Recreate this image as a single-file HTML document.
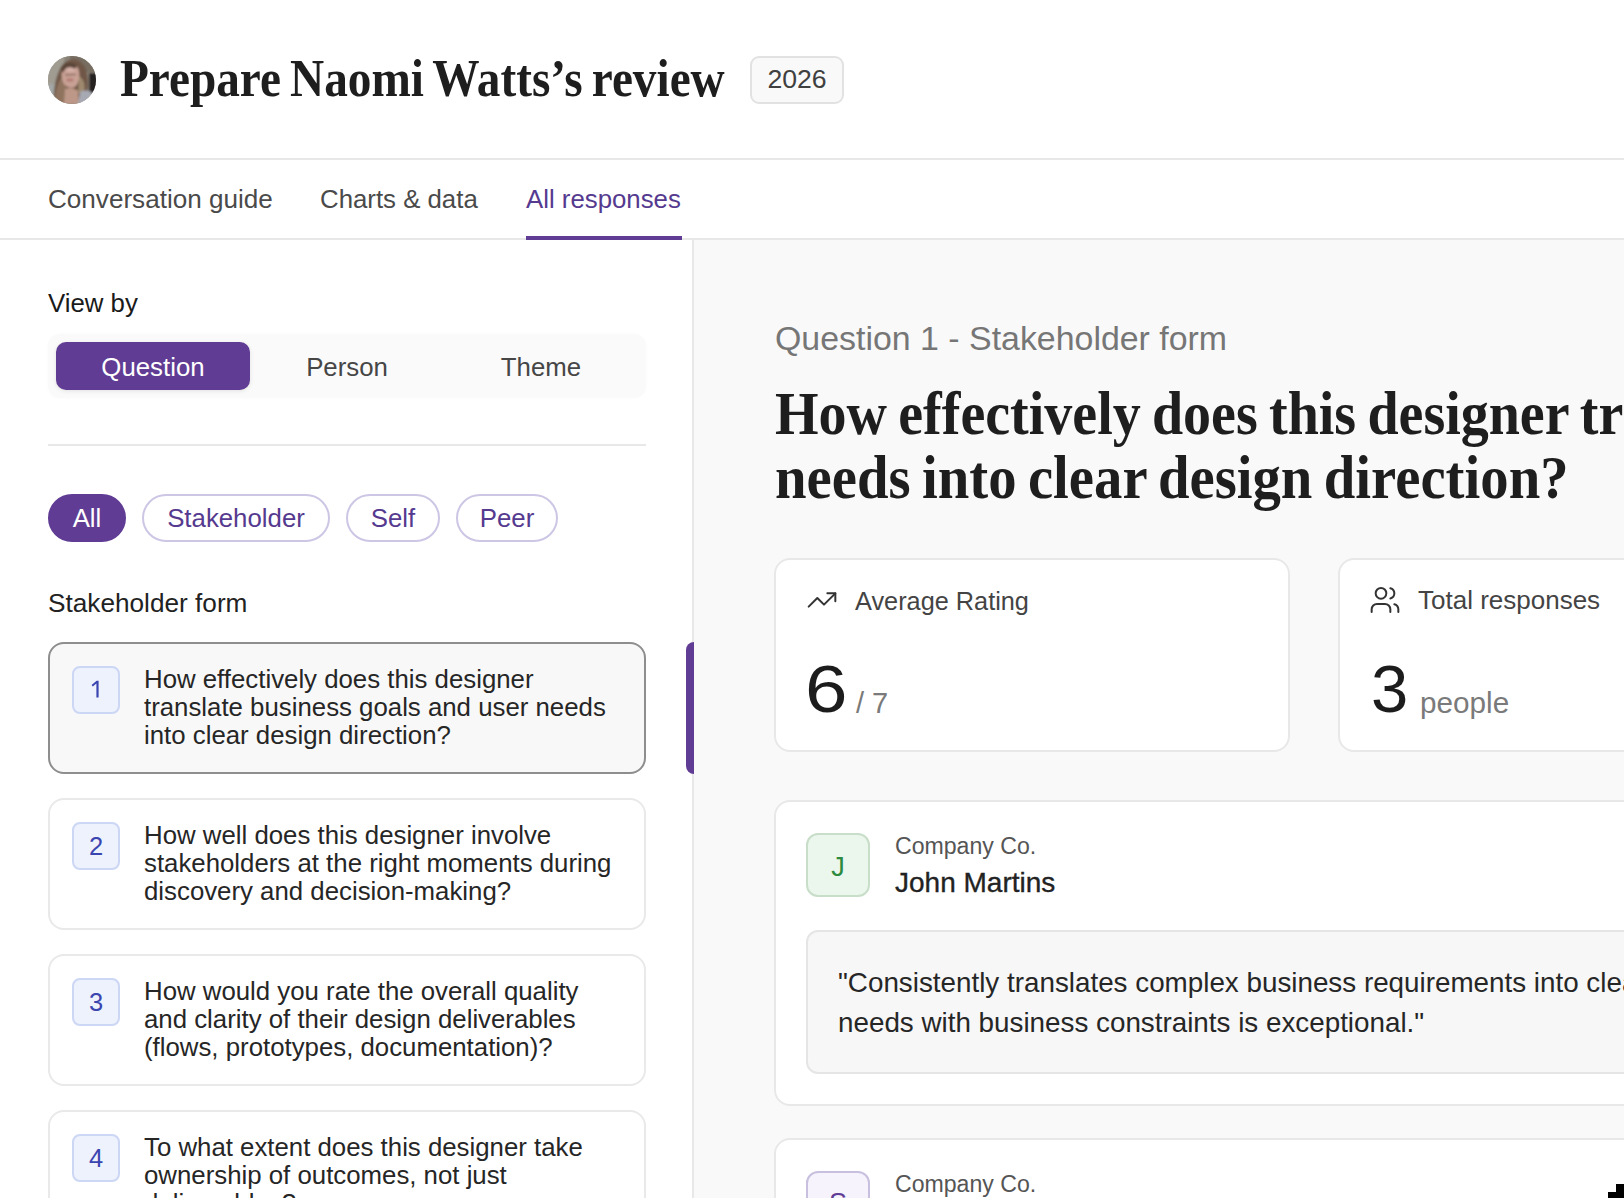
<!DOCTYPE html>
<html><head><meta charset="utf-8">
<style>
*{box-sizing:border-box;margin:0;padding:0}
html,body{width:1624px;height:1198px;overflow:hidden;background:#fff}
body{position:relative;font-family:"Liberation Sans",sans-serif;color:#1f1f1f}
.a{position:absolute;white-space:nowrap}
.t{font-size:25.8px;line-height:30px}
.serif{font-family:"Liberation Serif",serif;font-weight:bold;color:#1e1e1e;transform-origin:0 0}
#avatar{left:48px;top:56px;width:48px;height:48px;border-radius:50%;overflow:hidden;background:#8e877f}
#title{left:120px;top:47.8px;font-size:52.5px;line-height:60px;transform:scaleX(0.9);word-spacing:-3px}
#badge{left:750px;top:56px;width:94px;height:48px;border:2px solid #e2e2e2;border-radius:9px;background:#f9f9f9}
#badge span{position:absolute;left:0;right:0;text-align:center;top:6.1px;font-size:26.6px;line-height:30px;color:#404040}
.hline{left:0;width:1624px;height:2px;background:#e8e8e8}
.tab{top:184.2px;color:#4a4a4a}
#left{left:0;top:240px;width:692px;height:958px;background:#fff}
#vline{left:692px;top:240px;width:2px;height:958px;background:#e8e8e8}
#right{left:694px;top:240px;width:930px;height:958px;background:#f9f9f9}
#seg{left:48px;top:334px;width:598px;height:64px;background:#fafafa;border-radius:12px;box-shadow:0 0 4px rgba(0,0,0,0.02)}
.segb{top:342px;width:194px;height:48px;border-radius:10px;text-align:center}
.segb span{position:absolute;left:0;right:0;top:9.8px;font-size:25.8px;line-height:30px}
.pill{top:494px;height:48px;border-radius:24px;border:2px solid #cdc6e4;text-align:center;color:#553a8f}
.pill span{position:absolute;left:0;right:0;top:7.2px;font-size:25.8px;line-height:30px}
.card{left:48px;width:598px;height:132px;border:2px solid #e9e9e9;border-radius:16px;background:#fff}
.card.sel{border-color:#8e8e8e;background:#f8f8f8}
.num{position:absolute;left:22px;top:22px;width:48px;height:48px;border:2px solid #ccd7f6;background:#eef2fd;border-radius:8px;color:#3b45b0;text-align:center}
.num span{position:absolute;left:0;right:0;top:7px;font-size:25.5px;line-height:30px}
.qt{position:absolute;left:94px;top:21.2px;font-size:25.8px;line-height:28px;color:#262626;white-space:nowrap}
#bar{left:686px;top:642px;width:8px;height:132px;background:#603c94;border-radius:8px 0 0 8px}
.stat{top:558px;width:516px;height:194px;background:#fff;border:2px solid #e8e8e8;border-radius:16px}
.resp{left:774px;width:1080px;background:#fff;border:2px solid #e8e8e8;border-radius:16px}
.av{position:absolute;left:30px;top:31px;width:64px;height:64px;border-radius:12px;text-align:center}
.av span{position:absolute;left:0;right:0;top:17px;font-size:27px;line-height:30px}
#corner{left:1608px;top:1184px;width:16px;height:14px}
</style></head><body>

<div class="a" id="avatar">
  <svg width="48" height="48" viewBox="0 0 48 48">
    <defs><filter id="bl" x="-20%" y="-20%" width="140%" height="140%"><feGaussianBlur stdDeviation="1.1"/></filter></defs>
    <g filter="url(#bl)">
    <rect x="-4" y="-4" width="56" height="56" fill="#8a8378"/>
    <rect x="-4" y="-4" width="20" height="56" fill="#a09c92"/>
    <rect x="-4" y="28" width="12" height="24" fill="#a3a7a5"/>
    <rect x="22" y="-4" width="30" height="20" fill="#776d61"/>
    <rect x="41" y="17" width="10" height="20" fill="#262020"/>
    <path d="M6 48 C5 36 7 24 11 15 C14 7 20 3 26 3.5 C33 4 38 10 39 18 C41 27 40 35 37 40 L30 46 Z" fill="#6f5747"/>
    <path d="M6 48 C7 38 9 28 13 22 L18 27 L18 48 Z" fill="#8f735e"/>
    <path d="M31 20 C37 24 38 32 35 38 L30 37 Z" fill="#9f8a6f"/>
    <path d="M15 12 C17 9 26 8 30 12 C32 17 32 25 28 30 C25 33 19 32 16 28 C13 23 13 16 15 12 Z" fill="#c9a195"/>
    <ellipse cx="22.5" cy="12.5" rx="5.5" ry="3.2" fill="#d6b2a9"/>
    <ellipse cx="22" cy="24" rx="3.8" ry="1.7" fill="#b37c74"/>
    <path d="M17 19 L28 18.5" stroke="#6b5243" stroke-width="1.2"/>
    <path d="M16 48 L17 33 C21 31 27 32 30 35 L31 48 Z" fill="#bd9787"/>
    <path d="M30 48 L32 36 C36 34 41 34 44 37 L46 48 Z" fill="#a7a9b3"/>
    <path d="M13 13 C15 6 22 5 29 9 L27 13 C22 10 17 11 15 17 Z" fill="#5a4537"/>
    </g>
  </svg>
</div>
<div class="a serif" id="title">Prepare Naomi Watts’s review</div>
<div class="a" id="badge"><span>2026</span></div>

<div class="a hline" style="top:158px"></div>
<div class="a t tab" style="left:48px;font-size:26.1px">Conversation guide</div>
<div class="a t tab" style="left:320px">Charts &amp; data</div>
<div class="a t tab" style="left:526px;color:#553a8f">All responses</div>
<div class="a hline" style="top:238px"></div>

<div class="a" id="left"></div>
<div class="a" id="right"></div>
<div class="a" id="vline"></div>
<div class="a" style="left:526px;top:236px;width:156px;height:4px;background:#603c94"></div>

<!-- left panel -->
<div class="a t" style="left:48px;top:288.2px;color:#1a1a1a">View by</div>
<div class="a" id="seg"></div>
<div class="a segb" style="left:56px;background:#603c94;color:#fff;box-shadow:0 1px 4px rgba(0,0,0,0.10)"><span>Question</span></div>
<div class="a segb" style="left:250px;color:#464646"><span>Person</span></div>
<div class="a segb" style="left:444px;color:#464646"><span>Theme</span></div>
<div class="a" style="left:48px;top:444px;width:598px;height:2px;background:#e8e8e8"></div>

<div class="a pill" style="left:48px;width:78px;background:#603c94;border-color:#603c94;color:#fff"><span>All</span></div>
<div class="a pill" style="left:142px;width:188px"><span>Stakeholder</span></div>
<div class="a pill" style="left:346px;width:94px"><span>Self</span></div>
<div class="a pill" style="left:456px;width:102px"><span>Peer</span></div>

<div class="a t" style="left:48px;top:588.2px;color:#222;font-size:26.2px">Stakeholder form</div>

<div class="a card sel" style="top:642px"><div class="num"><svg style="position:absolute;left:0;top:0" width="48" height="48" viewBox="0 0 48 48"><path d="M17.6 16.9 L22.6 12.7 L24.6 12.7 L24.6 29.6 L22.4 29.6 L22.4 15.6 L18.8 18.6 Z" fill="#3b45b0"/></svg></div><div class="qt">How effectively does this designer<br>translate business goals and user needs<br>into clear design direction?</div></div>
<div class="a card" style="top:798px"><div class="num"><span>2</span></div><div class="qt">How well does this designer involve<br>stakeholders at the right moments during<br>discovery and decision-making?</div></div>
<div class="a card" style="top:954px"><div class="num"><span>3</span></div><div class="qt">How would you rate the overall quality<br>and clarity of their design deliverables<br>(flows, prototypes, documentation)?</div></div>
<div class="a card" style="top:1110px;height:132px"><div class="num"><span>4</span></div><div class="qt">To what extent does this designer take<br>ownership of outcomes, not just<br>deliverables?</div></div>
<div class="a" id="bar"></div>

<!-- right panel -->
<div class="a" style="left:775px;top:318px;font-size:33.9px;line-height:40px;color:#767676">Question 1 - Stakeholder form</div>
<div class="a serif" style="left:775px;top:381.5px;font-size:61px;line-height:64px;transform:scaleX(0.918);word-spacing:-3px">How effectively does this designer translate business goals and user</div>
<div class="a serif" style="left:775px;top:445.5px;font-size:61px;line-height:64px;transform:scaleX(0.93);word-spacing:-3px">needs into clear design direction?</div>

<div class="a stat" style="left:774px">
  <svg style="position:absolute;left:30px;top:24px" width="32" height="32" viewBox="0 0 24 24" fill="none" stroke="#333" stroke-width="1.5" stroke-linecap="round" stroke-linejoin="round"><polyline points="22 7 13.5 15.5 8.5 10.5 2 17"/><polyline points="16 7 22 7 22 13"/></svg>
</div>
<div class="a t" style="left:855px;top:585.5px;color:#444;font-size:25.3px">Average Rating</div>
<div class="a" style="left:805px;top:654.4px;font-size:67px;line-height:70px;color:#1c1c1c;transform:scaleX(1.14);transform-origin:0 0">6</div>
<div class="a" style="left:856px;top:687.5px;font-size:29px;line-height:30px;color:#7a7a7a">/ 7</div>

<div class="a stat" style="left:1338px">
  <svg style="position:absolute;left:29px;top:24px" width="32" height="32" viewBox="0 0 24 24" fill="none" stroke="#333" stroke-width="1.5" stroke-linecap="round" stroke-linejoin="round"><path d="M16 21v-2a4 4 0 0 0-4-4H6a4 4 0 0 0-4 4v2"/><circle cx="9" cy="7" r="4"/><path d="M22 21v-2a4 4 0 0 0-3-3.87"/><path d="M16 3.13a4 4 0 0 1 0 7.75"/></svg>
</div>
<div class="a t" style="left:1418px;top:585px;color:#444;font-size:26px">Total responses</div>
<div class="a" style="left:1371px;top:654.4px;font-size:67px;line-height:70px;color:#1c1c1c">3</div>
<div class="a" style="left:1420px;top:687.5px;font-size:29.7px;line-height:30px;color:#7a7a7a">people</div>

<div class="a resp" style="top:800px;height:306px">
  <div class="av" style="background:#ebf6ec;border:2px solid #c8dec9;color:#2d8a3e"><span>J</span></div>
  <div style="position:absolute;left:30px;top:128px;width:1100px;height:144px;background:#f7f7f7;border:2px solid #e5e5e5;border-radius:12px"></div>
</div>
<div class="a" style="left:895px;top:833px;font-size:23.1px;line-height:26px;color:#555">Company Co.</div>
<div class="a" style="left:895px;top:868.3px;font-size:28px;line-height:30px;color:#222;-webkit-text-stroke:0.35px #222">John Martins</div>
<div class="a" style="left:838px;top:963.4px;font-size:27.8px;line-height:40px;color:#262626">"Consistently translates complex business requirements into clear, actionable design. Balances user<br>needs with business constraints is exceptional."</div>

<div class="a resp" style="top:1138px;height:304px">
  <div class="av" style="top:31px;background:#f6f3fd;border:2px solid #c8c0de;color:#603c94"><span style="top:15px">S</span></div>
</div>
<div class="a" style="left:895px;top:1170.5px;font-size:23.1px;line-height:26px;color:#555">Company Co.</div>

<svg class="a" id="corner" viewBox="0 0 16 14"><path d="M8 0 H16 V14 H0 V8 H8 Z" fill="#000"/></svg>
</body></html>
